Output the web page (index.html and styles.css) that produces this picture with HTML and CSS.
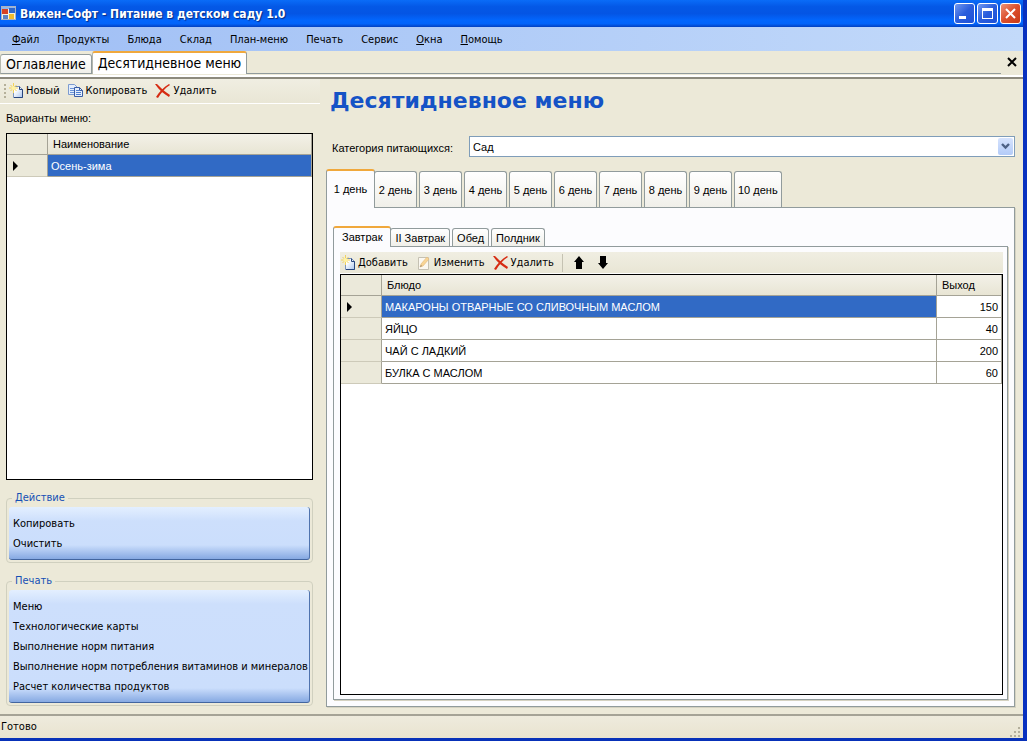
FILE: index.html
```
<!DOCTYPE html>
<html lang="ru">
<head>
<meta charset="utf-8" />
<title>Вижен-Софт - Питание в детском саду 1.0</title>
	<link rel="stylesheet" href="styles.css">
</head>

<body>
	<!-- общие значки панелей инструментов -->
	<svg class="defs" width="0" height="0" aria-hidden="true">
		<linearGradient id="paper" x1="0" y1="0" x2="1" y2="1">
			<stop offset="0.3" stop-color="#fff"/><stop offset="1" stop-color="#a9c4ee"/>
		</linearGradient>
		<symbol id="icon-new" viewBox="0 0 16 16">
			<path d="M5.500 3.500H11.500L14.500 6.500V14.500H5.500Z" fill="url(#paper)" stroke="#7c93ba"/>
			<path d="M14.500 6.500V14.500H6M11.500 3.500V6.500H14.500" fill="none" stroke="#27457e"/>
			<path d="M5.500 0V10M1 5H10M2.500 2L8.500 8M8.500 2L2.500 8" stroke="#f3d25a" fill="none"/>
			<circle cx="5.500" cy="5" r="2" fill="#fff3a4"/>
		</symbol>
		<symbol id="icon-copy" viewBox="0 0 16 16">
			<path d="M0.500 1.500H6.500L9.500 4.500V11.500H0.500Z" fill="#e4eefc" stroke="#7c9bd0"/>
			<path d="M2 5.500H7M2 7.500H6M2 9.500H6" stroke="#6b94d8"/>
			<path d="M6.500 4.500H11.500L14.500 7.500V13.500H6.500Z" fill="#e4eefc" stroke="#3a5da5"/>
			<path d="M11.500 4.500V7.500H14.500" fill="none" stroke="#3a5da5"/>
			<path d="M8 7.500H11M8 9.500H13M8 11.500H13" stroke="#4f7fd2"/>
		</symbol>
		<symbol id="icon-delete" viewBox="0 0 16 16">
			<path d="M0 1L2 1C6 5 10 9 15 12L14 14C9 11 4 7 0 1Z" fill="#d62b12"/>
			<path d="M14 1C9 4 4 9 1 14L3 15C6 10 10 5 15 2Z" fill="#d62b12"/>
		</symbol>
		<symbol id="icon-edit" viewBox="0 0 16 16">
			<path d="M2.500 2.500H12.500V14.500H2.500Z" fill="#fbf8f1" stroke="#c5c1b3"/>
			<path d="M4 12L5 9L11 2L13 4L7 11Z" fill="#f8d596" stroke="#e3b777" stroke-width="0.600"/>
			<path d="M4 12L5 10L6 11Z" fill="#8d806b"/>
		</symbol>
	</svg>

	<div class="window">
		<header class="titlebar">
			<svg class="app-icon" width="15" height="15" viewBox="0 0 15 15">
				<rect x="0.500" y="0.500" width="14" height="13" fill="#f4f1e4" stroke="#a8b3c4"/>
				<path d="M1 1H14V3H1Z" fill="#91b6eb"/>
				<rect x="1" y="3" width="6" height="5" fill="#d64224"/>
				<rect x="8" y="2" width="6" height="5" fill="#2f69cd"/>
				<rect x="2" y="9" width="5" height="4" fill="#5b82c5"/>
				<rect x="8" y="8" width="5" height="5" fill="#f0bb2e"/>
			</svg>
			<span class="titlebar-text">Вижен-Софт - Питание в детском саду 1.0</span>
			<button class="win-btn" type="button" aria-label="Свернуть">
				<svg width="19" height="19" viewBox="0 0 19 19"><path d="M4 12H11V15H4Z" fill="#fff"/></svg>
			</button>
			<button class="win-btn" type="button" aria-label="Развернуть">
				<svg width="19" height="19" viewBox="0 0 19 19"><path d="M4 4H15V15H4ZM5 7V14H14V7Z" fill="#fff" fill-rule="evenodd"/></svg>
			</button>
			<button class="win-btn win-close" type="button" aria-label="Закрыть">
				<svg width="19" height="19" viewBox="0 0 19 19"><path d="M5 5L14 14M14 5L5 14" stroke="#fff" stroke-width="2" fill="none"/></svg>
			</button>
		</header>

		<nav class="menubar">
			<button type="button"><u>Ф</u>айл</button>
			<button type="button">Продукты</button>
			<button type="button">Блюда</button>
			<button type="button">Склад</button>
			<button type="button">План-меню</button>
			<button type="button">Печать</button>
			<button type="button">Сервис</button>
			<button type="button"><u>О</u>кна</button>
			<button type="button"><u>П</u>омощь</button>
		</nav>

		<div class="doc-tabs">
			<button class="doc-tab" type="button">Оглавление</button>
			<button class="doc-tab active" type="button">Десятидневное меню</button>
			<span class="doc-line"></span>
			<button class="doc-close" type="button" aria-label="Закрыть вкладку">
				<svg width="10" height="10" viewBox="0 0 10 10"><path d="M1 1L9 9M9 1L1 9" stroke="#000" stroke-width="2" fill="none"/></svg>
			</button>
		</div>

		<main class="content">
			<aside class="sidebar">
				<div class="toolbar">
					<span class="grip"></span>
					<button type="button"><svg><use href="#icon-new"/></svg>Новый</button>
					<button type="button"><svg><use href="#icon-copy"/></svg>Копировать</button>
					<button type="button"><svg><use href="#icon-delete"/></svg>Удалить</button>
				</div>
				<div class="sidebar-body">
					<p class="caption">Варианты меню:</p>
					<div class="grid">
						<table>
							<thead>
								<tr><th class="row-head"></th><th>Наименование</th></tr>
							</thead>
							<tbody>
								<tr class="selected">
									<td class="row-head"><svg width="5" height="10" viewBox="0 0 5 10"><path d="M0 0L5 5L0 10Z"/></svg></td>
									<td>Осень-зима</td>
								</tr>
							</tbody>
						</table>
					</div>
					<fieldset class="group">
						<legend>Действие</legend>
						<div class="actions">
							<button type="button">Копировать</button>
							<button type="button">Очистить</button>
						</div>
					</fieldset>
					<fieldset class="group">
						<legend>Печать</legend>
						<div class="actions">
							<button type="button">Меню</button>
							<button type="button">Технологические карты</button>
							<button type="button">Выполнение норм питания</button>
							<button type="button">Выполнение норм потребления витаминов и минералов</button>
							<button type="button">Расчет количества продуктов</button>
						</div>
					</fieldset>
				</div>
			</aside>

			<section class="detail">
				<h1>Десятидневное меню</h1>
				<div class="category">
					<label for="category">Категория питающихся:</label>
					<div class="combo">
						<select id="category">
							<option>Сад</option>
						</select>
						<span class="combo-arrow">
							<svg width="9" height="7" viewBox="0 0 9 7"><path d="M1 1L4.500 4.500L8 1" stroke="#4d6185" stroke-width="2.400" fill="none"/></svg>
						</span>
					</div>
				</div>

				<div class="tabs day-tabs">
					<button class="tab active" type="button">1 день</button>
					<button class="tab" type="button">2 день</button>
					<button class="tab" type="button">3 день</button>
					<button class="tab" type="button">4 день</button>
					<button class="tab" type="button">5 день</button>
					<button class="tab" type="button">6 день</button>
					<button class="tab" type="button">7 день</button>
					<button class="tab" type="button">8 день</button>
					<button class="tab" type="button">9 день</button>
					<button class="tab" type="button">10 день</button>
				</div>
				<div class="panel day-panel">
					<div class="tabs meal-tabs">
						<button class="tab active" type="button">Завтрак</button>
						<button class="tab" type="button">II Завтрак</button>
						<button class="tab" type="button">Обед</button>
						<button class="tab" type="button">Полдник</button>
					</div>
					<div class="panel meal-panel">
						<div class="toolbar meal-toolbar">
							<button type="button"><svg><use href="#icon-new"/></svg>Добавить</button>
							<button type="button"><svg><use href="#icon-edit"/></svg>Изменить</button>
							<button type="button"><svg><use href="#icon-delete"/></svg>Удалить</button>
							<span class="separator"></span>
							<button type="button" aria-label="Вверх"><svg viewBox="0 0 16 16"><path d="M8 1L13 7H11V14H5V7H3Z"/></svg></button>
							<button type="button" aria-label="Вниз"><svg viewBox="0 0 16 16"><path d="M8 14L13 8H11V1H5V8H3Z"/></svg></button>
						</div>
						<div class="grid">
							<table>
								<thead>
									<tr><th class="row-head"></th><th>Блюдо</th><th class="num">Выход</th></tr>
								</thead>
								<tbody>
									<tr class="selected">
										<td class="row-head"><svg width="5" height="10" viewBox="0 0 5 10"><path d="M0 0L5 5L0 10Z"/></svg></td>
										<td>МАКАРОНЫ ОТВАРНЫЕ СО СЛИВОЧНЫМ МАСЛОМ</td>
										<td class="num">150</td>
									</tr>
									<tr><td class="row-head"></td><td>ЯЙЦО</td><td class="num">40</td></tr>
									<tr><td class="row-head"></td><td>ЧАЙ С ЛАДКИЙ</td><td class="num">200</td></tr>
									<tr><td class="row-head"></td><td>БУЛКА С МАСЛОМ</td><td class="num">60</td></tr>
								</tbody>
							</table>
						</div>
					</div>
				</div>
			</section>
		</main>

		<footer class="statusbar">
			<span>Готово</span>
			<svg width="12" height="12" viewBox="0 0 12 12"><path d="M9 1h2v2h-2zM9 5h2v2h-2zM9 9h2v2h-2zM5 5h2v2h-2zM5 9h2v2h-2zM1 9h2v2h-2z" fill="#b3ae9b"/></svg>
		</footer>
	</div>
</body>
</html>
```

FILE: styles.css
```
* {
	box-sizing: border-box;
}
body {
	margin: 0;
	font: 11px/14px "DejaVu Sans Condensed", "Liberation Sans", sans-serif;
	color: #000;
}
button {
	margin: 0; padding: 0;
	border: 0; background: none;
	font: inherit; color: inherit;
	white-space: nowrap;
}
.defs {
	position: absolute;
}
.window {
	display: flex; flex-direction: column;
	height: 100vh; min-height: 600px;
	background: #ece9d8;
	border-right: 4px solid #0831c0;
	border-bottom: 3px solid #0831b8;
}

/* заголовок окна */
.titlebar {
	display: flex; align-items: center; gap: 2px;
	flex: none;
	height: 27px; padding-right: 2px; padding-left: 1px;
	background: linear-gradient(#0a6cf8, #0458e6 25%, #0455e4 50%, #0266fd 75%, #0264fa 88%, #0340c0);
}
.titlebar-text {
	flex: 1;
	padding-left: 2px;
	font: bold 12px/20px "DejaVu Sans Condensed", "Liberation Sans", sans-serif;
	color: #fff;
	text-shadow: 1px 1px 1px #0a2a80;
}
.win-btn {
	width: 21px; height: 21px;
	border: 1px solid #fff; border-radius: 3px;
	background: linear-gradient(135deg, #7198f0, #2a5ddc 50%, #1c50d8);
}
.win-btn svg {
	display: block;
}
.win-close {
	background: linear-gradient(135deg, #ec9479, #dc4f2c 50%, #c83a18);
}

/* главное меню */
.menubar {
	display: flex; align-items: center; gap: 18px;
	flex: none;
	height: 24px; padding-top: 1px; padding-left: 12px;
	background: linear-gradient(to right, #a0bff5, #c3dafa);
}

/* вкладки документов */
.doc-tabs {
	display: flex; align-items: flex-end;
	flex: none;
	height: 28px; padding-bottom: 3px;
	border-bottom: 2px solid #8c897c;
	background: linear-gradient(#ece9d8 24px, #fff 24px);
}
.doc-tab {
	height: 20px; padding: 0 5px;
	border: 1px solid #919b9c; border-left-color: #b5b8ae; border-radius: 3px 3px 0 0;
	background: linear-gradient(#fff, #f0efe9);
	font-size: 14px; line-height: 18px;
}
.doc-tab.active {
	height: 23px; padding: 0 5px 1px;
	border-top: 2px solid #f0a83c; border-bottom: 0;
	background: #fff;
}
.doc-line {
	flex: 1;
	border-bottom: 1px solid #919b9c;
}
.doc-close {
	align-self: center;
	margin-right: 6px; margin-left: 6px;
	line-height: 10px;
}

.content {
	display: flex;
	flex: 1; min-height: 0;
}
.sidebar {
	display: flex; flex-direction: column;
	flex: none;
	width: 320px;
}
.toolbar {
	display: flex; align-items: center; gap: 8px;
	flex: none;
	height: 25px; padding-left: 4px;
	border-bottom: 1px solid #fff;
	background: linear-gradient(#f0eee2, #e9e6d5);
}
.toolbar button {
	display: flex; align-items: center; gap: 2px;
}
.toolbar svg {
	width: 16px; height: 16px;
}
.grip {
	width: 2px; height: 14px; margin-right: -6px;
	background: repeating-linear-gradient(#b5b09a 0 2px, transparent 2px 4px);
}
.sidebar-body {
	display: flex; flex-direction: column;
	flex: 1; min-height: 0;
	padding: 7px 7px 8px 6px;
}
.caption, .category, .tab, .grid {
	font-family: "Liberation Sans", sans-serif;
}
.caption {
	margin: 0 0 8px;
}

/* таблицы */
.grid {
	flex: 1; min-height: 0;
	overflow: hidden;
	border: 1px solid #000;
	background: #fff;
}
.grid table {
	width: 100%;
	border-collapse: separate; border-spacing: 0;
	table-layout: fixed;
}
.grid th, .grid td {
	height: 22px; padding: 0 3px;
	border-right: 1px solid #a5a396;
	border-bottom: 1px solid #a5a396;
	text-align: left;
	white-space: nowrap;
}
.grid th {
	height: 21px; padding: 0 5px;
	background: linear-gradient(#f3f1e8, #e8e5d4);
	font-weight: normal;
}
.grid .row-head {
	width: 41px; padding: 0 6px;
	background: #ebe9da;
}
.grid td.row-head {
	border-bottom-color: #cdcab9;
}
.grid .row-head svg {
	display: block;
}
.grid .selected td:nth-child(2) {
	background: #316ac5;
	color: #fff;
}
.grid .num {
	width: 65px;
}
.grid td.num {
	text-align: right;
}

/* группы действий */
.group {
	flex: none;
	min-width: 0;
	margin: 11px 0 0; padding: 2px 2px;
	border: 1px solid #d0d0bf; border-radius: 4px;
}
.group legend {
	margin-left: 3px; padding: 0 3px;
	color: #1550b5;
}
.actions {
	display: flex; flex-direction: column; align-items: flex-start;
	padding: 7px 4px 5px;
	border-right: 1px solid #4f73ae; border-bottom: 1px solid #42659f; border-radius: 3px;
	background: linear-gradient(#e3efff, #cddffc 14px, #cbdefc calc(100% - 14px), #86a9e2);
}
.actions button {
	height: 20px;
}

.detail {
	display: flex; flex-direction: column;
	flex: 1; min-width: 0;
	padding: 8px 8px 7px 6px;
}
.detail h1 {
	margin: 0 4px 21px;
	font: bold 22px/28px "DejaVu Sans", "Liberation Sans", sans-serif;
	color: #1553c6;
}
.category {
	display: flex; align-items: center;
	flex: none;
	margin-bottom: 12px; padding-left: 6px;
}
.category label {
	width: 137px;
	padding-top: 2px;
}
.combo {
	display: grid;
	flex: 1;
}
.combo select {
	grid-area: 1 / 1;
	height: 21px; padding: 0 3px;
	border: 1px solid #7f9db9; border-radius: 0;
	background: #fff;
	font: inherit; color: #000;
	appearance: none;
}
.combo-arrow {
	grid-area: 1 / 1; justify-self: end; align-self: center;
	display: flex; align-items: center; justify-content: center;
	width: 15px; height: 17px; margin-right: 2px;
	border-radius: 2px;
	background: linear-gradient(#d6e3fd, #b3cbf8);
	pointer-events: none;
}

/* вкладки дней и приемов пищи */
.tabs {
	display: flex; align-items: flex-end; gap: 2px;
	flex: none;
}
.tab {
	border: 1px solid #919b9c; border-bottom: 0; border-radius: 3px 3px 0 0;
	background: linear-gradient(#fff, #f0efe9);
}
.tab.active {
	z-index: 1;
	margin-right: -3px; margin-bottom: -1px;
	border-top: 2px solid #f0a83c;
	background: #fcfcfe;
}
.day-tabs .tab {
	min-width: 43px; height: 36px; padding: 0 3px;
}
.day-tabs .tab.active {
	min-width: 49px; height: 39px; padding-bottom: 2px;
}
.meal-tabs .tab {
	height: 18px; padding: 0 4px;
}
.meal-tabs .tab.active {
	height: 21px; padding: 0 8px 2px;
}
.panel {
	display: flex; flex-direction: column;
	flex: 1; min-height: 0;
	border: 1px solid #919b9c;
	background: #fcfcfe;
	box-shadow: 1px 1px 0 #d5d2c1;
}
.day-panel {
	padding: 18px 6px 6px;
}
.meal-panel {
	padding: 5px 4px 4px 6px;
}
.meal-toolbar {
	height: 22px; padding-left: 0;
}
.separator {
	width: 1px; height: 18px;
	background: #c5c2b2;
}

/* строка состояния */
.statusbar {
	display: flex; align-items: center; justify-content: space-between;
	flex: none;
	height: 24px; padding: 0 2px 0 1px;
	border-top: 2px solid #a5a396;
	background: linear-gradient(#eeebdd, #e9e3d0);
}
.statusbar svg {
	align-self: flex-end;
}
```
